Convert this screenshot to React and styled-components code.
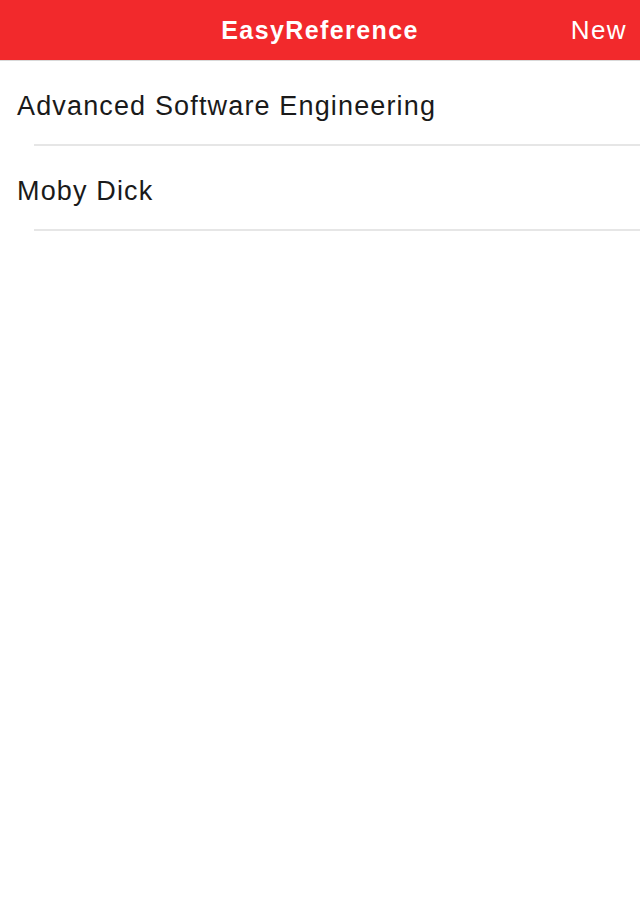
import React from "react";
import styled, { createGlobalStyle } from "styled-components";

const books = ["Advanced Software Engineering", "Moby Dick"];

function App() {
  return (
    <>
      <GlobalStyle />
      <Styled.Screen>
        <Styled.NavBar>
          <Styled.Title>EasyReference</Styled.Title>
          <Styled.NavButton>New</Styled.NavButton>
        </Styled.NavBar>
        <Styled.List>
          {books.map((title) => (
            <Styled.Row key={title}>
              <Styled.RowText>{title}</Styled.RowText>
            </Styled.Row>
          ))}
        </Styled.List>
      </Styled.Screen>
    </>
  );
}

export default App;

const GlobalStyle = createGlobalStyle`
  html, body {
    margin: 0;
    padding: 0;
    background: #ffffff;
  }
  body {
    font-family: "Liberation Sans", Arial, sans-serif;
  }
`;

const Styled = {
  Screen: styled.div`
    width: 640px;
    height: 920px;
    background: #ffffff;
    display: flex;
    flex-direction: column;
  `,
  NavBar: styled.div`
    position: relative;
    height: 60px;
    background-color: #f2292c;
    border-bottom: 1px solid #d9d9d9;
    display: flex;
    align-items: center;
    justify-content: center;
    flex-shrink: 0;
  `,
  Title: styled.div`
    color: #ffffff;
    font-size: 25px;
    font-weight: bold;
    letter-spacing: 1.4px;
    margin-top: 1px;
  `,
  NavButton: styled.button`
    position: absolute;
    right: 13px;
    top: 15px;
    border: none;
    background: none;
    padding: 0;
    color: #ffffff;
    font-family: "Liberation Sans", Arial, sans-serif;
    font-size: 26px;
    letter-spacing: 1.4px;
    line-height: 30px;
  `,
  List: styled.div`
    display: flex;
    flex-direction: column;
  `,
  Row: styled.div`
    height: 83px;
    margin-left: 34px;
    border-bottom: 2px solid #e6e6e6;
    display: flex;
    align-items: center;
  `,
  RowText: styled.div`
    margin-left: -17px;
    margin-top: 7px;
    font-size: 27px;
    letter-spacing: 1.15px;
    color: #1a1a1a;
  `,
};
